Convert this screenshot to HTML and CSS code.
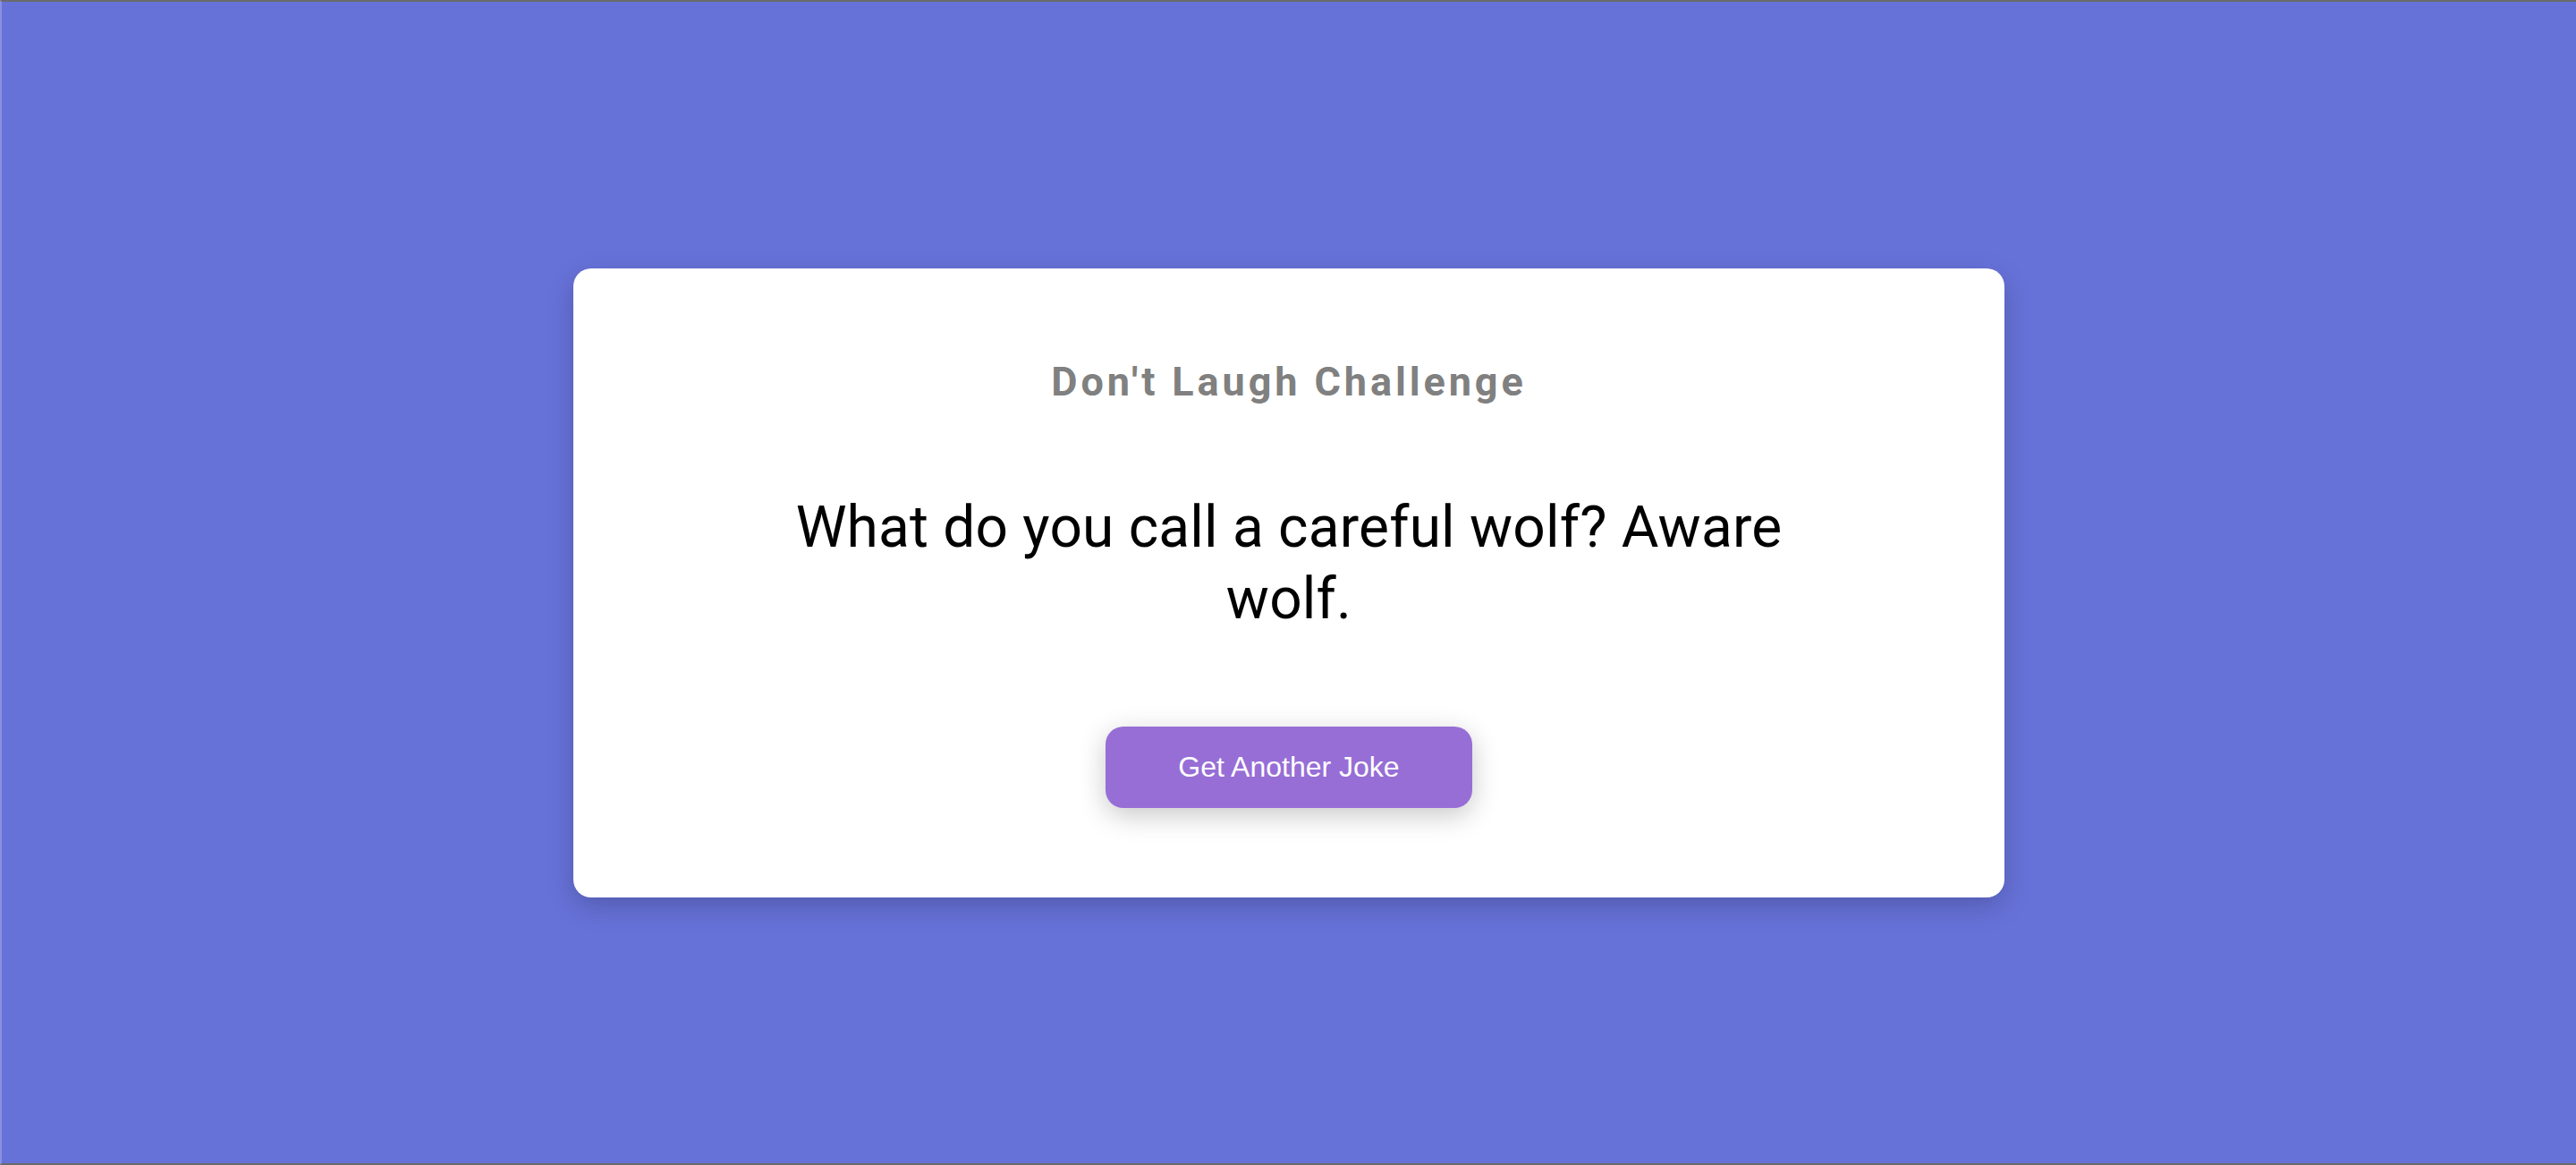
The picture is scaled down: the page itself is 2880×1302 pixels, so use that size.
FILE: index.html
```html
<!DOCTYPE html>
<html lang="en">
<head>
<meta charset="utf-8">
<title>Don't Laugh Challenge</title>
<link rel="stylesheet" href="styles.css">
</head>
<body>
  <main class="card">
    <h1 class="title">Don't Laugh Challenge</h1>
    <p class="joke">What do you call a careful wolf? Aware wolf.</p>
    <button class="btn" type="button">Get Another Joke</button>
  </main>
</body>
</html>
```
FILE: styles.css
```css
* { box-sizing: border-box; }
html, body { margin: 0; padding: 0; }
body {
  height: 100vh;
  background: #6772d9;
  border-top: 2px solid #6a6a6a;
  border-bottom: 2px solid #6a6a6a;
  border-left: 2px solid #8a90e0;
  display: flex;
  align-items: center;
  justify-content: center;
  font-family: Roboto, "Liberation Sans", sans-serif;
}
.card {
  width: 1600px;
  background: #ffffff;
  border-radius: 20px;
  box-shadow: 0 10px 30px rgba(0, 0, 0, 0.2);
  padding: 100px 100px;
  display: flex;
  flex-direction: column;
  align-items: center;
  text-align: center;
}
.title {
  margin: 0 0 97px;
  font-size: 45px;
  font-weight: 700;
  line-height: normal;
  color: #808080;
  letter-spacing: 3.9px;
}
.joke {
  margin: 0 0 102px;
  max-width: 1200px;
  font-size: 64px;
  line-height: 80px;
  color: #000;
  letter-spacing: 0.2px;
}
.btn {
  border: none;
  background: #976ed6;
  color: #fff;
  font-family: "Liberation Sans", Arial, sans-serif;
  font-size: 32px;
  line-height: 37px;
  padding: 27px 81px;
  border-radius: 20px;
  box-shadow: 0 8px 30px rgba(0, 0, 0, 0.22);
  cursor: pointer;
}
```
